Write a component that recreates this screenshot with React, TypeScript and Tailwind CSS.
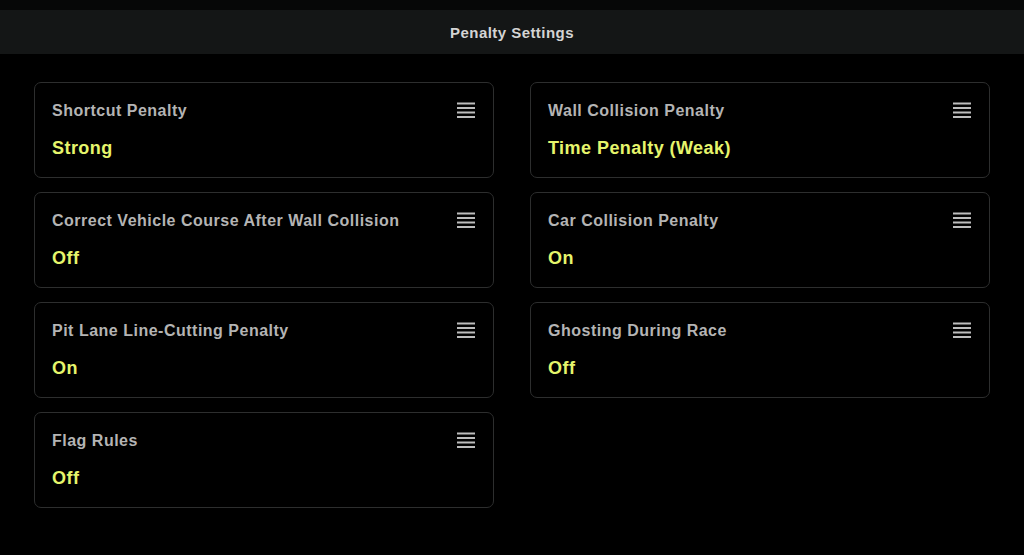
import React from "react";

const left = [
  { t: "Shortcut Penalty", v: "Strong" },
  { t: "Correct Vehicle Course After Wall Collision", v: "Off" },
  { t: "Pit Lane Line-Cutting Penalty", v: "On" },
  { t: "Flag Rules", v: "Off" },
];
const right = [
  { t: "Wall Collision Penalty", v: "Time Penalty (Weak)" },
  { t: "Car Collision Penalty", v: "On" },
  { t: "Ghosting During Race", v: "Off" },
];

function MenuIcon() {
  return (
    <svg width="18" height="16" viewBox="0 0 18 16" className="shrink-0">
      <rect x="0" y="0.5" width="18" height="2" fill="#bcbcbc" />
      <rect x="0" y="5" width="18" height="2" fill="#bcbcbc" />
      <rect x="0" y="9.5" width="18" height="2" fill="#bcbcbc" />
      <rect x="0" y="14" width="18" height="2" fill="#bcbcbc" />
    </svg>
  );
}

function Card({ t, v }: { t: string; v: string }) {
  return (
    <div className="h-[96px] rounded-[7px] border border-[#2d2e2e] bg-black pl-[17px] pr-[18px] pt-[17px]">
      <div className="flex items-start justify-between">
        <div className="text-[16px] leading-[22px] font-bold text-[#b4b4b4] tracking-[0.5px]">{t}</div>
        <div className="pt-[2px]"><MenuIcon /></div>
      </div>
      <div className="mt-[15px] text-[18px] leading-[22px] font-bold text-[#e6f56c] tracking-[0.45px]">{v}</div>
    </div>
  );
}

export default function App() {
  return (
    <div
      className="w-[1024px] h-[555px] bg-black overflow-hidden"
      style={{ fontFamily: '"Liberation Sans", Arial, sans-serif' }}
    >
      <div className="h-[10px] bg-[#060707]" />
      <div className="h-[44px] bg-[#141616] flex items-center justify-center pt-[2px]">
        <span className="text-[15px] font-bold text-[#d4d4d4] tracking-[0.45px]">Penalty Settings</span>
      </div>
      <div className="grid grid-cols-2 gap-x-[36px] px-[34px] pt-[28px]">
        <div className="flex flex-col gap-[14px]">
          {left.map((c) => (
            <Card key={c.t} {...c} />
          ))}
        </div>
        <div className="flex flex-col gap-[14px]">
          {right.map((c) => (
            <Card key={c.t} {...c} />
          ))}
        </div>
      </div>
    </div>
  );
}
